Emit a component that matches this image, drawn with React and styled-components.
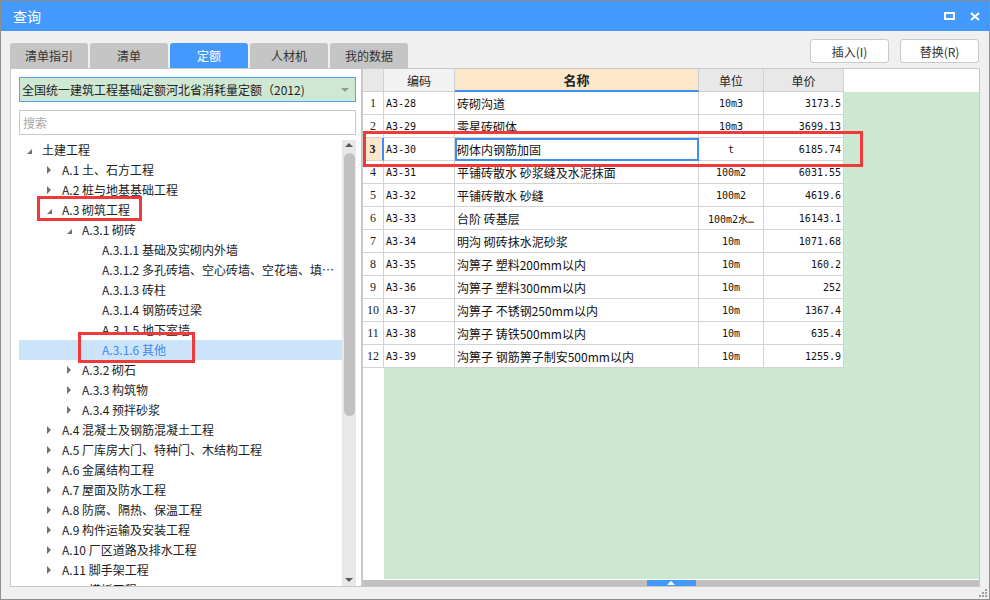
import React from 'react';
import styled, { createGlobalStyle } from 'styled-components';

const GlobalStyle = createGlobalStyle`
  html, body {
    margin: 0;
    padding: 0;
    background: #fff;
  }
  body {
    font-family: "Noto Sans CJK SC", "Liberation Sans", sans-serif;
    font-size: 12px;
    color: #222;
  }
  * {
    box-sizing: border-box;
  }
`;

const MONO = `"DejaVu Sans Mono", "Noto Sans CJK SC", monospace`;

const Window = styled.div`
  width: 990px;
  height: 600px;
  border: 1px solid #8e8e8e;
  background: #f0f0f0;
  display: flex;
  flex-direction: column;
  overflow: hidden;
`;

const TitleBar = styled.div`
  height: 30px;
  flex: none;
  background: #4499ff;
  color: #fff;
  display: flex;
  align-items: center;
  justify-content: space-between;
  padding: 0 9px 0 12px;
  font-size: 14px;
  line-height: 1;
`;

const WinIcons = styled.div`
  display: flex;
  align-items: center;
  gap: 15px;
`;

const Body = styled.div`
  flex: 1;
  display: flex;
  flex-direction: column;
  padding: 0 9px;
`;

const Toolbar = styled.div`
  height: 37px;
  flex: none;
  display: flex;
  justify-content: space-between;
`;

const Tabs = styled.div`
  align-self: flex-end;
  display: flex;
  gap: 2px;
`;

const Tab = styled.div`
  width: 78px;
  height: 25px;
  border-radius: 3px 3px 0 0;
  background: ${(p) => (p.$active ? '#4499ff' : '#c5c5c5')};
  color: ${(p) => (p.$active ? '#fff' : '#333')};
  display: flex;
  align-items: center;
  justify-content: center;
  font-size: 12px;
`;

const Actions = styled.div`
  display: flex;
  gap: 11px;
  margin-top: 8px;
  margin-right: 1px;
`;

const Button = styled.button`
  width: 79px;
  height: 24px;
  background: #fff;
  border: 1px solid #c9c9c9;
  border-radius: 3px;
  font-family: inherit;
  font-size: 12px;
  color: #333;
  padding: 0;
`;

const Main = styled.div`
  height: 519px;
  flex: none;
  display: flex;
`;

const LeftPanel = styled.div`
  width: 352px;
  flex: none;
  background: #fff;
  border: 1px solid #c8c8c8;
  padding: 8px 5px 0 8px;
  display: flex;
  flex-direction: column;
`;

const Combo = styled.div`
  height: 25px;
  flex: none;
  border: 1px solid #5aa2f3;
  background: #cfe8d4;
  display: flex;
  align-items: center;
  justify-content: space-between;
  padding: 0 6px 0 2px;
  color: #222;
`;

const DownCaret = styled.span`
  width: 0;
  height: 0;
  border-left: 4px solid transparent;
  border-right: 4px solid transparent;
  border-top: 4px solid ${(p) => p.$color || '#888'};
`;

const UpCaret = styled.span`
  width: 0;
  height: 0;
  border-left: 4px solid transparent;
  border-right: 4px solid transparent;
  border-bottom: 4px solid ${(p) => p.$color || '#888'};
`;

const Search = styled.input`
  height: 25px;
  flex: none;
  margin-top: 8px;
  border: 1px solid #c8c8c8;
  padding: 0 3px;
  font-family: inherit;
  font-size: 12px;
  outline: none;
  &::placeholder {
    color: #a8a8a8;
  }
`;

const TreeArea = styled.div`
  flex: 1;
  min-height: 0;
  margin-top: 5px;
  display: flex;
`;

const TreeList = styled.div`
  flex: 1;
  min-width: 0;
  overflow: hidden;
`;

const TreeRow = styled.div`
  position: relative;
  height: 20px;
  display: flex;
  align-items: center;
  padding-left: ${(p) => 5 + p.$level * 20}px;
  background: ${(p) => (p.$selected ? '#cce4f9' : 'transparent')};
  color: ${(p) => (p.$selected ? '#3d8be8' : '#222')};
  white-space: nowrap;
  line-height: 20px;
`;

const Toggle = styled.span`
  width: 18px;
  flex: none;
  display: flex;
  align-items: center;
  padding-left: 3px;
`;

const Collapsed = styled.span`
  width: 0;
  height: 0;
  border-top: 4px solid transparent;
  border-bottom: 4px solid transparent;
  border-left: 4px solid #707070;
`;

const Expanded = styled.span`
  width: 0;
  height: 0;
  margin-top: 2px;
  border-left: 5px solid transparent;
  border-bottom: 5px solid #707070;
`;

const Label = styled.span`
  min-width: 0;
  overflow: hidden;
  text-overflow: ellipsis;
  padding-right: 8px;
`;

// red annotation boxes drawn over the content
const Mark = styled.div`
  position: absolute;
  top: ${(p) => p.$top}px;
  left: ${(p) => p.$left}px;
  width: ${(p) => p.$width}px;
  height: ${(p) => p.$height}px;
  border: 3px solid #f03a3a;
  pointer-events: none;
  z-index: 2;
`;

const VScroll = styled.div`
  width: 14px;
  flex: none;
  background: #e8e8e8;
  display: flex;
  flex-direction: column;
  align-items: center;
  padding: 3px 0 4px;
`;

const Thumb = styled.div`
  width: 11px;
  height: 263px;
  margin-top: 6px;
  border-radius: 6px;
  background: #c1c1c1;
`;

const Spacer = styled.div`
  flex: 1;
`;

const RightPanel = styled.div`
  flex: 1;
  background: #fff;
  border: 1px solid #c8c8c8;
  display: flex;
  flex-direction: column;
`;

const Grid = styled.div`
  position: relative;
  flex: 1;
  display: grid;
  grid-template-columns: 21px 71px 244px 65px 80px 1fr;
  grid-template-rows: repeat(13, 23px) 1fr;
`;

const HeadCell = styled.div`
  background: ${(p) => p.$bg || '#e8e8e8'};
  border-right: 1px solid #d0d0d0;
  border-bottom: ${(p) => (p.$accent ? '2px solid #3c8ef0' : '1px solid #d0d0d0')};
  display: flex;
  align-items: center;
  justify-content: center;
  font-size: ${(p) => (p.$accent ? 13 : 12)}px;
  font-weight: ${(p) => (p.$accent ? 700 : 400)};
  color: #222;
`;

const Cell = styled.div`
  border-right: 1px solid #d3d3d3;
  border-bottom: 1px solid #d3d3d3;
  display: flex;
  align-items: center;
  justify-content: ${(p) => p.$align || 'flex-start'};
  padding: 0 2px;
  white-space: nowrap;
  overflow: hidden;
  font-family: ${(p) => (p.$mono ? MONO : 'inherit')};
  font-size: ${(p) => (p.$mono ? 10 : 12)}px;
  color: #111;
`;

const NameCell = styled(Cell)`
  outline: ${(p) => (p.$active ? '2px solid #3d8ef0' : 'none')};
  outline-offset: -2px;
`;

const NumCell = styled.div`
  border-right: ${(p) => (p.$active ? '2px solid #3d8ef0' : '1px solid #d3d3d3')};
  border-bottom: 1px solid #d3d3d3;
  background: ${(p) => (p.$active ? '#fde6c9' : '#fff')};
  display: flex;
  align-items: center;
  justify-content: center;
  font-family: "Liberation Serif", serif;
  font-size: 12px;
  font-weight: ${(p) => (p.$active ? 700 : 400)};
  color: #222;
`;

const GreenSide = styled.div`
  grid-column: 6;
  grid-row: 2 / -1;
  background: #cde8d1;
`;

const GreenBottom = styled.div`
  grid-column: 2 / 6;
  grid-row: 14;
  background: #cde8d1;
`;

const HScroll = styled.div`
  flex: none;
  height: 6px;
  margin-top: 1px;
  background: #c0c0c0;
  display: flex;
  justify-content: center;
`;

const HThumb = styled.div`
  width: 49px;
  background: #4499ff;
  display: flex;
  align-items: center;
  justify-content: center;
`;

const BottomStrip = styled.div`
  flex: 1;
  display: flex;
  justify-content: flex-end;
  align-items: flex-end;
  padding: 0 0 1px 0;
  margin-right: -8px;
`;

const tabs = ['清单指引', '清单', '定额', '人材机', '我的数据'];

// level, state: e = expanded, c = collapsed, l = leaf
const tree = [
  [0, 'e', '土建工程'],
  [1, 'c', 'A.1 土、石方工程'],
  [1, 'c', 'A.2 桩与地基基础工程'],
  [1, 'e', 'A.3 砌筑工程', { top: -4, left: 18, width: 105, height: 25 }],
  [2, 'e', 'A.3.1 砌砖'],
  [3, 'l', 'A.3.1.1 基础及实砌内外墙'],
  [3, 'l', 'A.3.1.2 多孔砖墙、空心砖墙、空花墙、填充墙'],
  [3, 'l', 'A.3.1.3 砖柱'],
  [3, 'l', 'A.3.1.4 钢筋砖过梁'],
  [3, 'l', 'A.3.1.5 地下室墙'],
  [3, 'l', 'A.3.1.6 其他', { top: -8, left: 59, width: 117, height: 31 }, true],
  [2, 'c', 'A.3.2 砌石'],
  [2, 'c', 'A.3.3 构筑物'],
  [2, 'c', 'A.3.4 预拌砂浆'],
  [1, 'c', 'A.4 混凝土及钢筋混凝土工程'],
  [1, 'c', 'A.5 厂库房大门、特种门、木结构工程'],
  [1, 'c', 'A.6 金属结构工程'],
  [1, 'c', 'A.7 屋面及防水工程'],
  [1, 'c', 'A.8 防腐、隔热、保温工程'],
  [1, 'c', 'A.9 构件运输及安装工程'],
  [1, 'c', 'A.10 厂区道路及排水工程'],
  [1, 'c', 'A.11 脚手架工程'],
  [1, 'c', 'A.12 模板工程'],
];

const rows = [
  ['A3-28', '砖砌沟道', '10m3', '3173.5'],
  ['A3-29', '零星砖砌体', '10m3', '3699.13'],
  ['A3-30', '砌体内钢筋加固', 't', '6185.74'],
  ['A3-31', '平铺砖散水 砂浆缝及水泥抹面', '100m2', '6031.55'],
  ['A3-32', '平铺砖散水 砂缝', '100m2', '4619.6'],
  ['A3-33', '台阶 砖基层', '100m2水…', '16143.1'],
  ['A3-34', '明沟 砌砖抹水泥砂浆', '10m', '1071.68'],
  ['A3-35', '沟箅子 塑料200mm以内', '10m', '160.2'],
  ['A3-36', '沟箅子 塑料300mm以内', '10m', '252'],
  ['A3-37', '沟箅子 不锈钢250mm以内', '10m', '1367.4'],
  ['A3-38', '沟箅子 铸铁500mm以内', '10m', '635.4'],
  ['A3-39', '沟箅子 钢筋箅子制安500mm以内', '10m', '1255.9'],
];

const ACTIVE_ROW = 2;

const App = () => {
  return (
    <>
      <GlobalStyle />
      <Window>
        <TitleBar>
          <span>查询</span>
          <WinIcons>
            <svg width="11" height="8" viewBox="0 0 11 8">
              <rect x="1" y="1" width="9" height="6" fill="none" stroke="#fff" strokeWidth="2" />
            </svg>
            <svg width="10" height="9" viewBox="0 0 10 9">
              <path d="M1 1L9 8M9 1L1 8" stroke="#fff" strokeWidth="2" />
            </svg>
          </WinIcons>
        </TitleBar>
        <Body>
          <Toolbar>
            <Tabs>
              {tabs.map((t) => (
                <Tab key={t} $active={t === '定额'}>{t}</Tab>
              ))}
            </Tabs>
            <Actions>
              <Button>插入(I)</Button>
              <Button>替换(R)</Button>
            </Actions>
          </Toolbar>
          <Main>
            <LeftPanel>
              <Combo>
                <span>全国统一建筑工程基础定额河北省消耗量定额（2012)</span>
                <DownCaret $color="#999" />
              </Combo>
              <Search placeholder="搜索" />
              <TreeArea>
                <TreeList>
                  {tree.map(([level, state, text, mark, selected]) => (
                    <TreeRow key={text} $level={level} $selected={selected}>
                      <Toggle>
                        {state === 'e' && <Expanded />}
                        {state === 'c' && <Collapsed />}
                      </Toggle>
                      <Label>{text}</Label>
                      {mark && (
                        <Mark $top={mark.top} $left={mark.left} $width={mark.width} $height={mark.height} />
                      )}
                    </TreeRow>
                  ))}
                </TreeList>
                <VScroll>
                  <UpCaret $color="#5a5a5a" />
                  <Thumb />
                  <Spacer />
                  <DownCaret $color="#5a5a5a" />
                </VScroll>
              </TreeArea>
            </LeftPanel>
            <RightPanel>
              <Grid>
                <HeadCell />
                <HeadCell $bg="#f2f2f2">编码</HeadCell>
                <HeadCell $bg="#fde7cb" $accent>名称</HeadCell>
                <HeadCell>单位</HeadCell>
                <HeadCell>单价</HeadCell>
                <div />
                {rows.map(([code, name, unit, price], i) => (
                  <React.Fragment key={code}>
                    <NumCell $active={i === ACTIVE_ROW}>{i + 1}</NumCell>
                    <Cell $mono>{code}</Cell>
                    <NameCell $active={i === ACTIVE_ROW}>{name}</NameCell>
                    <Cell $mono $align="center">{unit}</Cell>
                    <Cell $mono $align="flex-end">{price}</Cell>
                  </React.Fragment>
                ))}
                <GreenSide />
                <GreenBottom />
                <Mark $top={62} $left={0} $width={500} $height={36} />
              </Grid>
              <HScroll>
                <HThumb>
                  <UpCaret $color="#fff" />
                </HThumb>
              </HScroll>
            </RightPanel>
          </Main>
          <BottomStrip>
            <svg width="9" height="9" viewBox="0 0 9 9">
              <rect x="6" y="0" width="2" height="2" fill="#a0a0a0" />
              <rect x="3" y="3" width="2" height="2" fill="#a0a0a0" />
              <rect x="6" y="3" width="2" height="2" fill="#a0a0a0" />
              <rect x="0" y="6" width="2" height="2" fill="#a0a0a0" />
              <rect x="3" y="6" width="2" height="2" fill="#a0a0a0" />
              <rect x="6" y="6" width="2" height="2" fill="#a0a0a0" />
            </svg>
          </BottomStrip>
        </Body>
      </Window>
    </>
  );
};

export default App;
